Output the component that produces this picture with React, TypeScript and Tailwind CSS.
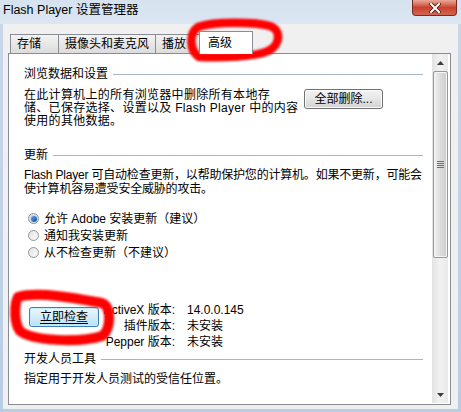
import React from "react";

const font = { fontFamily: '"Liberation Sans", "Noto Sans CJK SC", sans-serif' };

const Tab: React.FC<{ label: string; w: string; active?: boolean }> = ({ label, w, active }) =>
  active ? (
    <div
      className={`${w} h-[23px] -ml-px -mb-px relative z-10 border border-b-0 border-[#898c95] bg-white pl-[8px] pt-[3px] text-[12px] leading-[16px] text-black`}
    >
      {label}
    </div>
  ) : (
    <div
      className={`${w} h-[19px] -ml-px mt-[3px] border border-b-0 border-[#898c95] bg-gradient-to-b from-[#f3f3f3] to-[#dcdcdc] pl-[6px] pt-[1px] text-[12px] leading-[16px] text-black`}
    >
      {label}
    </div>
  );

const Header: React.FC<{ label: string }> = ({ label }) => (
  <div className="flex items-center h-[14px] leading-[14px]">
    <span className="text-[12px] text-black">{label}</span>
    <div className="flex-1 h-px bg-[#a8b4bf] ml-[5px]" />
  </div>
);

const Radio: React.FC<{ label: string; checked?: boolean }> = ({ label, checked }) => (
  <div className="flex items-center h-[17px] pl-[4px]">
    <span className="w-[11px] h-[11px] rounded-full border border-[#8f9597] bg-gradient-to-br from-[#e4e4e4] to-[#fafafa] flex items-center justify-center">
      {checked && (
        <span className="w-[6px] h-[6px] rounded-full bg-gradient-to-br from-[#5fa6e8] to-[#104a9e] shadow-[0_0_2px_#3b8de0]" />
      )}
    </span>
    <span className="ml-[5px] text-[12px] text-black whitespace-nowrap">{label}</span>
  </div>
);

export default function App() {
  return (
    <div
      className="relative w-[461px] h-[412px] overflow-hidden flex flex-col bg-gradient-to-b from-[#c9d8ea] to-[#b8cde4]"
      style={font}
    >
      {/* title bar */}
      <div className="h-[24px] flex justify-between bg-gradient-to-b from-[#d6e2ef] to-[#dbe6f2]">
        <div className="pl-[3px] pt-[3px] text-[12.5px] leading-[15px] text-black">
          Flash Player 设置管理器
        </div>
        <div className="mr-[4px] w-[45px] h-[16px] rounded-b-[4px] border border-t-0 border-[#7a2b20] bg-gradient-to-b from-[#e9a899] via-[#c9412d] to-[#d4644f] flex items-center justify-center">
          <svg width="12" height="10" viewBox="0 0 12 10">
            <path d="M2 1 L10 9 M10 1 L2 9" stroke="#4a1a12" strokeWidth="3.6" strokeLinecap="square" />
            <path d="M2 1 L10 9 M10 1 L2 9" stroke="#ffffff" strokeWidth="2" strokeLinecap="square" />
          </svg>
        </div>
      </div>

      {/* window body */}
      <div className="mx-[3px] mb-[3px] flex-1 bg-[#f0f0f0] pl-[5px] pr-[6px] pt-[7px] flex flex-col">
        <div className="flex pl-[3px]">
          <Tab label="存储" w="w-[49px]" />
          <Tab label="摄像头和麦克风" w="w-[98px]" />
          <Tab label="播放" w="w-[45px]" />
          <Tab label="高级" w="w-[54px]" active />
        </div>

        <div className="w-[443px] h-[352px] border border-[#898c95] bg-white flex pb-[1px]">
          {/* content */}
          <div className="flex-1 min-w-0 pl-[15px] pr-[9px] pt-[13px] text-[12px] text-black flex flex-col">
            <Header label="浏览数据和设置" />
            <div className="flex mt-[8px]">
              <div className="w-[265px] leading-[13px] whitespace-nowrap tracking-[0.3px]">
                在此计算机上的所有浏览器中删除所有本地存
                <br />
                储、已保存选择、设置以及 Flash Player 中的内容
                <br />
                使用的其他数据。
              </div>
              <div className="ml-[15px] w-[79px] h-[20px] rounded-[3px] border border-[#707070] bg-gradient-to-b from-[#f3f3f3] via-[#e6e6e6] to-[#d2d2d2] flex items-center justify-center leading-[14px] shadow-[inset_0_0_0_1px_#fcfcfc]">
                全部删除...
              </div>
            </div>

            <div className="mt-[20px]">
              <Header label="更新" />
            </div>
            <div className="mt-[6px] leading-[14px] whitespace-nowrap tracking-[-0.2px]">
              Flash Player 可自动检查更新，以帮助保护您的计算机。如果不更新，可能会
              <br />
              使计算机容易遭受安全威胁的攻击。
            </div>

            <div className="mt-[14px] flex flex-col">
              <Radio label="允许 Adobe 安装更新（建议）" checked />
              <Radio label="通知我安装更新" />
              <Radio label="从不检查更新（不建议）" />
            </div>

            <div className="mt-[41px] flex">
              <div className="ml-[5px] mt-[5px] w-[70px] h-[20px] rounded-[3px] border border-[#3c7fb1] bg-gradient-to-b from-[#eaf6fd] via-[#d3eefc] to-[#b6e1fb] flex items-center justify-center shadow-[inset_0_0_0_1px_#c8ebfd]">
                <span className="leading-[14px] underline underline-offset-2">立即检查</span>
              </div>
              <div className="w-[76px] text-right leading-[16px] flex flex-col whitespace-nowrap">
                <span>ActiveX 版本:</span>
                <span>插件版本:</span>
                <span>Pepper 版本:</span>
              </div>
              <div className="ml-[12px] leading-[16px] flex flex-col">
                <span>14.0.0.145</span>
                <span>未安装</span>
                <span>未安装</span>
              </div>
            </div>

            <div className="mt-[2px]">
              <Header label="开发人员工具" />
            </div>
            <div className="mt-[6px] leading-[14px] whitespace-nowrap">指定用于开发人员测试的受信任位置。</div>
          </div>

          {/* scrollbar */}
          <div className="w-[16px] mr-[2px] bg-gradient-to-r from-[#e3e3e3] via-[#f2f2f2] to-[#e9e9e9] flex flex-col items-center">
            <div className="h-[17px] flex items-center justify-center">
              <svg width="7" height="4" viewBox="0 0 7 4">
                <path d="M0 4 L3.5 0 L7 4 Z" fill="#3c3c3c" />
              </svg>
            </div>
            <div className="w-[15px] h-[187px] rounded-[2px] border border-[#979797] bg-gradient-to-r from-[#f2f2f2] via-[#dcdcdc] to-[#cdcdcd] flex flex-col items-center justify-center gap-[1px] shadow-[inset_0_0_0_1px_#f5f5f5]">
              <span className="w-[7px] h-px bg-[#6e6e6e]" />
              <span className="w-[7px] h-px bg-[#6e6e6e]" />
              <span className="w-[7px] h-px bg-[#6e6e6e]" />
              <span className="w-[7px] h-px bg-[#6e6e6e]" />
            </div>
            <div className="flex-1" />
            <div className="h-[17px] flex items-center justify-center">
              <svg width="7" height="4" viewBox="0 0 7 4">
                <path d="M0 0 L3.5 4 L7 0 Z" fill="#3c3c3c" />
              </svg>
            </div>
          </div>
        </div>
      </div>

      {/* red annotation marks */}
      <svg className="absolute inset-0 pointer-events-none" width="461" height="412" viewBox="0 0 461 412">
        <defs>
          <filter id="soft" x="-10%" y="-10%" width="120%" height="120%">
            <feGaussianBlur stdDeviation="0.9" />
          </filter>
        </defs>
        <g filter="url(#soft)" fill="none" stroke="#ff0000" strokeLinecap="round" strokeLinejoin="round">
          <path
            d="M199 57 C189 50 189 33 198 27 C215 21 256 22 270 26 C282 30 280 46 268 51 C255 57 222 58 199 57"
            strokeWidth="8.5"
          />
          <path
            d="M18 297 C40 291 80 299 102 303 C112 306 111 330 102 336 C80 343 32 341 20 331 C14 323 14 305 18 297"
            strokeWidth="10"
          />
        </g>
      </svg>
    </div>
  );
}
